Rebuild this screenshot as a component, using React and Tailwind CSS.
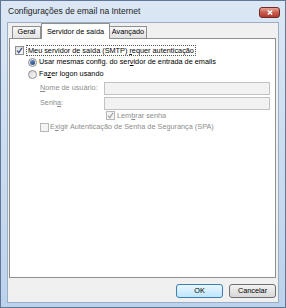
import React from "react";

const font = { fontFamily: '"Liberation Sans", Arial, sans-serif' };

function Check({ checked, disabled }) {
  return (
    <span
      className={`flex h-[9px] w-[9px] shrink-0 items-center justify-center border ${
        disabled ? "border-[#b8b8b8] bg-[#f4f4f4]" : "border-[#8f8f8f] bg-gradient-to-br from-[#dcdcdc] to-[#fbfbfb]"
      }`}
    >
      {checked && (
        <svg width="7" height="7" viewBox="0 0 7 7">
          <path
            d="M1 3.6 L2.8 5.6 L6 0.8"
            fill="none"
            stroke={disabled ? "#a8a8a8" : "#41598a"}
            strokeWidth="1.3"
          />
        </svg>
      )}
    </span>
  );
}

function Radio({ checked }) {
  return (
    <span className="flex h-[9px] w-[9px] shrink-0 items-center justify-center rounded-full border border-[#8f8f8f] bg-gradient-to-br from-[#d6d6d6] to-[#fbfbfb]">
      {checked && <span className="h-[5px] w-[5px] rounded-full bg-gradient-to-br from-[#6c9ad3] to-[#1a3f7a]" />}
    </span>
  );
}

export default function App() {
  return (
    <div
      className="flex h-[308px] w-[286px] flex-col whitespace-nowrap border border-[#5f7896] bg-gradient-to-b from-[#dbe7f4] to-[#bcd2ec] text-[7.3px] text-black"
      style={font}
    >
      {/* title bar */}
      <div className="flex h-[21px] shrink-0 items-center justify-between pl-[7px] pr-[5px]">
        <span className="text-[8.5px] leading-none text-[#1e1e1e]">Configurações de email na Internet</span>
        <span className="mt-[1px] flex h-[11px] w-[21px] items-center justify-center rounded-[3px] border border-[#6d2b25] bg-gradient-to-b from-[#e6a397] via-[#c85d4f] to-[#b7372b]">
          <svg width="6" height="5" viewBox="0 0 6 5">
            <path d="M0.8 0.4 L5.2 4.6 M5.2 0.4 L0.8 4.6" stroke="#fff" strokeWidth="1.4" />
          </svg>
        </span>
      </div>

      {/* client area */}
      <div className="mx-[6px] mb-[4px] flex flex-1 flex-col border border-[#9aaec6] bg-[#f0f0f0] pl-[1px] pr-[2px]">
        {/* tabs */}
        <div className="flex h-[15px] items-end pl-[3px]">
          <div className="flex h-[12px] w-[29px] items-center justify-center border border-b-0 border-[#8e8f8f] bg-gradient-to-b from-[#f7f7f7] to-[#e3e3e3]">
            Geral
          </div>
          <div className="relative z-10 -mb-px flex h-[16px] w-[69px] items-start justify-center border border-b-0 border-[#8e8f8f] bg-white pt-[3px]">
            Servidor de saída
          </div>
          <div className="flex h-[12px] w-[37px] items-center justify-center border border-b-0 border-l-0 border-[#8e8f8f] bg-gradient-to-b from-[#f7f7f7] to-[#e3e3e3]">
            Avançado
          </div>
        </div>

        {/* panel */}
        <div className="flex h-[240px] flex-col border border-[#8e8f8f] bg-white pl-[5px] pr-[5px] leading-none">
          <div className="mt-[5px] flex h-[12px] items-center gap-[2px]">
            <Check checked />
            <span className="border border-dotted border-[#555] px-[1px] leading-[9px]">
              Meu servidor de saída (SMTP) <u>r</u>equer autenticação
            </span>
          </div>
          <div className="flex h-[12px] items-center gap-[2px] pl-[13px]">
            <Radio checked />
            <span>
              Usar mesmas config. do ser<u>v</u>idor de entrada de emails
            </span>
          </div>
          <div className="flex h-[12px] items-center gap-[2px] pl-[13px]">
            <Radio />
            <span>
              Fa<u>z</u>er logon usando
            </span>
          </div>
          <div className="mt-[1px] flex h-[14px] items-center pl-[25px] text-[#8d8d8d]">
            <span className="w-[64px]">
              <u>N</u>ome de usuário:
            </span>
            <span className="h-[13px] flex-1 border border-[#c2c2c2] bg-[#f2f2f2]" />
          </div>
          <div className="mt-[1px] flex h-[14px] items-center pl-[25px] text-[#8d8d8d]">
            <span className="w-[64px]">
              Senh<u>a</u>:
            </span>
            <span className="h-[13px] flex-1 border border-[#c2c2c2] bg-[#f2f2f2]" />
          </div>
          <div className="flex h-[11px] items-center gap-[2px] pl-[91px] text-[#8d8d8d]">
            <Check checked disabled />
            <span>
              Lem<u>b</u>rar senha
            </span>
          </div>
          <div className="flex h-[12px] items-center gap-[1px] pl-[25px] text-[#8d8d8d]">
            <Check disabled />
            <span>
              E<u>x</u>igir Autenticação de Senha de Segurança (SPA)
            </span>
          </div>
        </div>

        {/* buttons */}
        <div className="mt-[6px] flex justify-end gap-[6px]">
          <button className="flex h-[14px] w-[47px] items-center justify-center rounded-[3px] border border-[#3c7fb1] bg-gradient-to-b from-[#eaf6fd] to-[#bee6fd] leading-none">
            OK
          </button>
          <button className="flex h-[14px] w-[47px] items-center justify-center rounded-[3px] border border-[#707070] bg-gradient-to-b from-[#f2f2f2] to-[#d8d8d8] leading-none">
            Cancelar
          </button>
        </div>
      </div>
    </div>
  );
}
